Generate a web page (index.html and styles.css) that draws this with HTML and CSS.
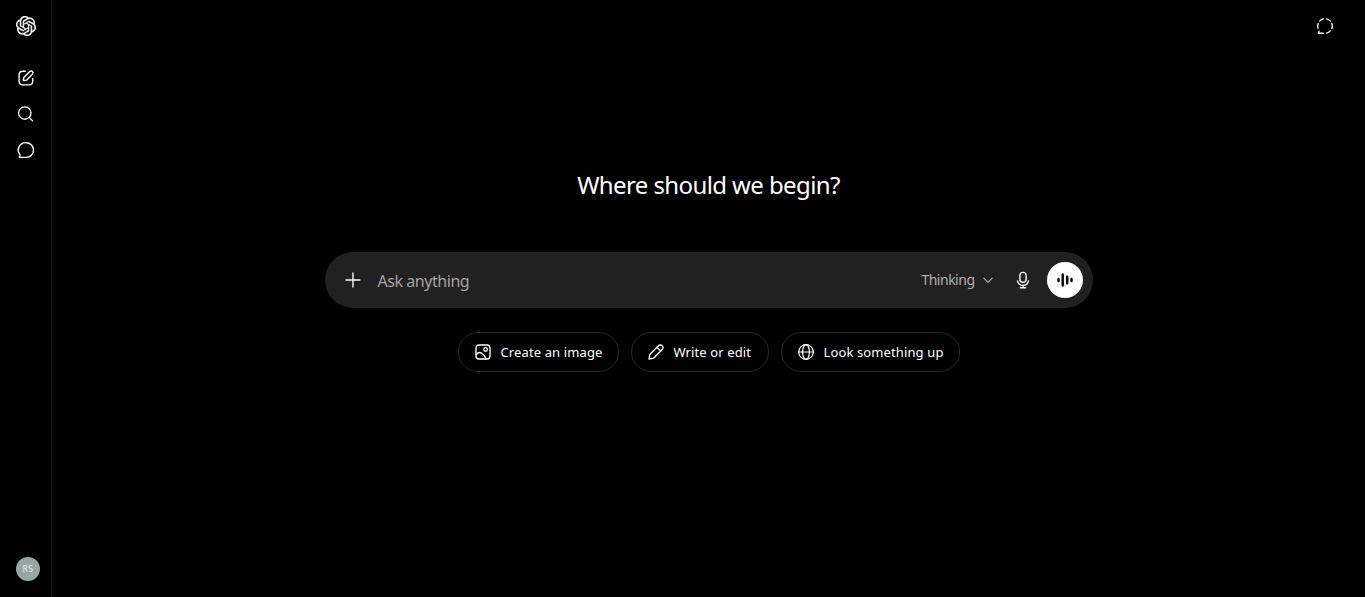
FILE: index.html
```html
<!DOCTYPE html>
<html lang="en">
<head>
    <meta charset="UTF-8">
    <meta name="viewport" content="width=device-width, initial-scale=1.0">
    <title>ChatGPT</title>
    <link rel="stylesheet" href="styles.css">
</head>
<body>

<!-- Sidebar -->
<aside class="sidebar">
    <a class="logo" href="#" aria-label="Home">
        <svg class="logo-mark" viewBox="0 0 24 24"><path d="M22.2819 9.8211a5.9847 5.9847 0 0 0-.5157-4.9108 6.0462 6.0462 0 0 0-6.5098-2.9A6.0651 6.0651 0 0 0 4.9807 4.1818a5.9847 5.9847 0 0 0-3.9977 2.9 6.0462 6.0462 0 0 0 .7427 7.0966 5.98 5.98 0 0 0 .511 4.9107 6.051 6.051 0 0 0 6.5146 2.9001A5.9847 5.9847 0 0 0 13.2599 24a6.0557 6.0557 0 0 0 5.7718-4.2058 5.9894 5.9894 0 0 0 3.9977-2.9001 6.0557 6.0557 0 0 0-.7475-7.0729zm-9.022 12.6081a4.4755 4.4755 0 0 1-2.8764-1.0408l.1419-.0804 4.7783-2.7582a.7948.7948 0 0 0 .3927-.6813v-6.7369l2.02 1.1686a.071.071 0 0 1 .038.052v5.5826a4.504 4.504 0 0 1-4.4945 4.4944zm-9.6607-4.1254a4.4708 4.4708 0 0 1-.5346-3.0137l.142.0852 4.783 2.7582a.7712.7712 0 0 0 .7806 0l5.8428-3.3685v2.3324a.0804.0804 0 0 1-.0332.0615L9.74 19.9502a4.4992 4.4992 0 0 1-6.1408-1.6464zM2.3408 7.8956a4.485 4.485 0 0 1 2.3655-1.9728V11.6a.7664.7664 0 0 0 .3879.6765l5.8144 3.3543-2.0201 1.1685a.0757.0757 0 0 1-.071 0l-4.8303-2.7865A4.504 4.504 0 0 1 2.3408 7.872zm16.5963 3.8558L13.1038 8.364 15.1192 7.2a.0757.0757 0 0 1 .071 0l4.8303 2.7913a4.4944 4.4944 0 0 1-.6765 8.1042v-5.6772a.79.79 0 0 0-.407-.667zm2.0107-3.0231l-.142-.0852-4.7735-2.7818a.7759.7759 0 0 0-.7854 0L9.409 9.2297V6.8974a.0662.0662 0 0 1 .0284-.0615l4.8303-2.7866a4.4992 4.4992 0 0 1 6.6802 4.66zM8.3065 12.863l-2.02-1.1638a.0804.0804 0 0 1-.038-.0567V6.0742a4.4992 4.4992 0 0 1 7.3757-3.4537l-.142.0805L8.704 5.459a.7948.7948 0 0 0-.3927.6813zm1.0976-2.3654l2.602-1.4998 2.6069 1.4998v2.9994l-2.5974 1.4997-2.6067-1.4997Z"/></svg>
    </a>
    <nav class="side-nav">
        <a href="#" aria-label="New chat">
            <svg class="icon" viewBox="0 0 20 20"><path d="M9.300 3.200H6.800C4.300 3.200 3.100 4.500 3.100 7v6.200c0 2.500 1.200 3.700 3.700 3.700H13c2.500 0 3.700-1.200 3.700-3.700v-2.600"/><path d="M7.300 12.700l.5-3.200 5.900-5.900a1.850 1.850 0 0 1 2.700 2.700l-5.900 5.900z"/></svg>
        </a>
        <a href="#" aria-label="Search chats">
            <svg class="icon" viewBox="0 0 20 20"><circle cx="8.800" cy="9" r="6.200"/><path d="M13.200 13.400l3.400 3.500"/></svg>
        </a>
        <a href="#" aria-label="Chats">
            <svg class="icon" viewBox="0 0 20 20"><path d="M10.200 2.700a7.300 7.300 0 1 1 0 14.600H3.200c.8-.9 1.100-1.700.8-2.700a7.300 7.300 0 0 1 6.200-11.900z"/></svg>
        </a>
    </nav>
    <div class="avatar">RS</div>
</aside>

<main class="main">
    <header class="topbar">
        <button class="icon-button" aria-label="Temporary chat">
            <svg class="icon" viewBox="0 0 20 20"><path d="M11.700 2.900a7.300 7.300 0 0 1 3.700 2.200M16.900 7.500a7.300 7.300 0 0 1 0 5M15.400 14.900a7.300 7.300 0 0 1-3.700 2.200M8.300 17.200H3.200c.6-.7.9-1.300.8-2M3 12.200a7.300 7.300 0 0 1 .1-4.700M4.600 5.100a7.300 7.300 0 0 1 3.700-2.200"/></svg>
        </button>
    </header>

    <div class="content">
        <h1 class="title">Where should we begin?</h1>

        <!-- Prompt box -->
        <div class="composer">
            <button class="icon-button" aria-label="Add">
                <svg class="icon" viewBox="0 0 20 20"><path d="M10 3v14M3 10h14"/></svg>
            </button>
            <div class="placeholder">Ask anything</div>
            <button class="model">
                <span>Thinking</span>
                <svg class="chevron" viewBox="0 0 12 12"><path d="M1.500 3.800L6 8.300l4.500-4.500"/></svg>
            </button>
            <button class="icon-button mic" aria-label="Dictate">
                <svg class="icon" viewBox="0 0 20 20"><rect x="6.900" y="2.400" width="6.200" height="10" rx="3.100"/><path d="M4.500 10.900a5.600 5.600 0 0 0 11 0M10 15.300v2.400M7.300 17.700h5.400"/></svg>
            </button>
            <button class="voice" aria-label="Voice mode">
                <svg class="wave" viewBox="0 0 20 20"><path d="M3.500 9v2M7.700 4.500v11M12.200 6.800v6.400M16.500 9v2"/></svg>
            </button>
        </div>

        <!-- Suggestions -->
        <div class="suggestions">
            <button class="pill pill-image">
                <svg class="icon" viewBox="0 0 20 20"><rect x="3" y="3" width="14" height="14" rx="3.200"/><circle cx="12.600" cy="7.400" r="1.800"/><path d="M3.200 12.600C5 10.400 7 10 9 11.500c1.900 1.400 3.200 3 4 5.300"/></svg>
                <span>Create an image</span>
            </button>
            <button class="pill pill-write">
                <svg class="icon" viewBox="0 0 20 20"><path d="M3 17l.8-4.600 8.600-8.600a2.600 2.600 0 0 1 3.800 3.800l-8.600 8.600zM10.900 5.300l3.800 3.800"/></svg>
                <span>Write or edit</span>
            </button>
            <button class="pill pill-search">
                <svg class="icon globe" viewBox="0 0 20 20"><circle cx="10" cy="10" r="7.300"/><ellipse cx="10" cy="10" rx="3.400" ry="7.300"/><path d="M2.700 10h14.600"/></svg>
                <span>Look something up</span>
            </button>
        </div>
    </div>
</main>

</body>
</html>
```
FILE: styles.css
```css
* {
    box-sizing: border-box;
}

body {
    display: flex;
    height: 100vh;
    margin: 0;
    overflow: hidden;
    background-color: #000;
    color: #fff;
    font-family: "Noto Sans", "Open Sans", sans-serif;
}

button {
    padding: 0;
    border: none;
    background: none;
    color: inherit;
    font: inherit;
    cursor: pointer;
}

svg {
    display: block;
    flex-shrink: 0;
}

.icon {
    width: 20px;
    height: 20px;
    fill: none;
    stroke: currentColor;
    stroke-width: 1.35;
    stroke-linecap: round;
    stroke-linejoin: round;
}

.globe {
    stroke-width: 1.2;
}

/* Sidebar */
.sidebar {
    display: flex;
    flex-direction: column;
    width: 52px;
    padding: 8px 7px 16px 8px;
    border-right: 1px solid #1c1c1c;
}

.logo,
.side-nav a,
.icon-button {
    display: flex;
    align-items: center;
    justify-content: center;
    width: 36px;
    height: 36px;
    color: #fff;
}

.logo-mark {
    width: 20px;
    height: 20px;
    fill: currentColor;
    stroke: currentColor;
    stroke-width: 0.4;
}

.side-nav {
    margin-top: 16px;
}

.avatar {
    width: 24px;
    height: 24px;
    margin: auto 0 0 8px;
    border-radius: 50%;
    background-color: #99a5a3;
    color: #e6ebea;
    font-size: 8.5px;
    line-height: 24px;
    letter-spacing: 0.5px;
    text-align: center;
}

/* Main area */
.main {
    display: flex;
    flex: 1;
    flex-direction: column;
}

.topbar {
    display: flex;
    justify-content: flex-end;
    height: 52px;
    padding: 8px 22px;
}

.content {
    width: 768px;
    margin: 0 auto;
    padding-top: 116px;
}

.title {
    margin: 0 0 50px;
    font-size: 24px;
    font-weight: 400;
    line-height: 34px;
    letter-spacing: -0.6px;
    text-align: center;
}

/* Prompt box */
.composer {
    display: flex;
    align-items: center;
    height: 56px;
    padding: 0 10px;
    border-radius: 28px;
    background-color: #212121;
}

.placeholder {
    flex: 1;
    margin-left: 7px;
    padding-top: 1px;
    color: #a3a3a3;
    font-size: 16px;
    letter-spacing: -0.45px;
}

.model {
    display: flex;
    align-items: center;
    gap: 7px;
    color: #afafaf;
    font-size: 14px;
    letter-spacing: -0.5px;
}

.model span {
    padding-bottom: 1px;
}

.chevron {
    width: 12px;
    height: 12px;
    fill: none;
    stroke: currentColor;
    stroke-width: 1.2;
}

.mic {
    margin: 0 6px 0 11px;
}

.voice {
    display: flex;
    align-items: center;
    justify-content: center;
    width: 36px;
    height: 36px;
    border-radius: 50%;
    background-color: #fff;
    color: #000;
}

.wave {
    width: 20px;
    height: 20px;
    fill: none;
    stroke: currentColor;
    stroke-width: 2.4;
    stroke-linecap: round;
}

/* Suggestions */
.suggestions {
    display: flex;
    justify-content: center;
    gap: 12px;
    margin-top: 24px;
}

.pill {
    display: flex;
    align-items: center;
    gap: 8px;
    height: 40px;
    padding: 0 14px;
    border: 1px solid #292929;
    border-radius: 20px;
    font-size: 13px;
    letter-spacing: 0.12px;
    white-space: nowrap;
}

.pill-image {
    width: 161px;
}

.pill-write {
    width: 138px;
}

.pill-search {
    width: 179px;
}
```
